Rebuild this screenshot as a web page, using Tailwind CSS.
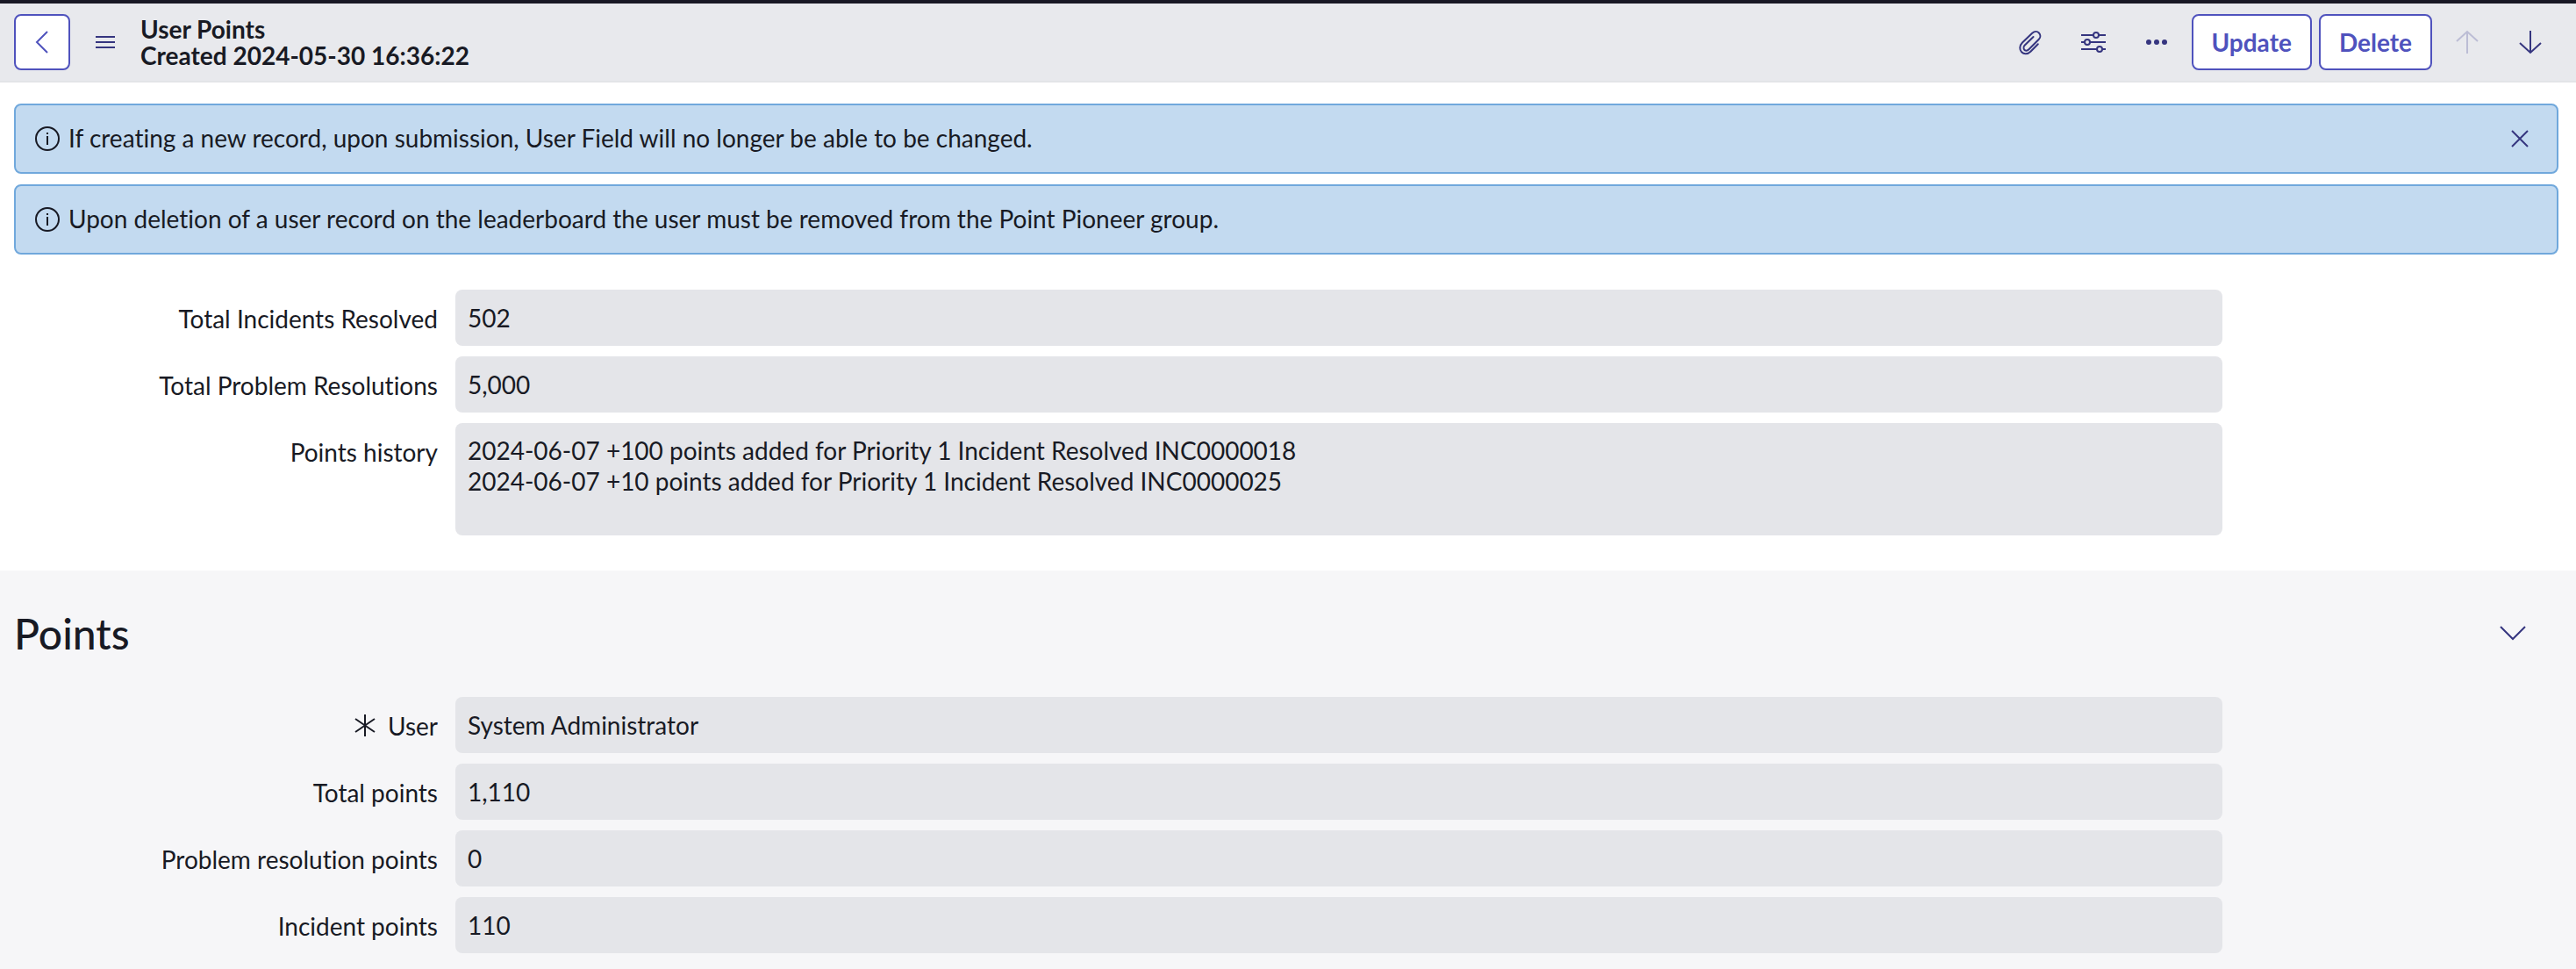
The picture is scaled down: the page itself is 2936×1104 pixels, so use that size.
<!DOCTYPE html>
<html lang="en">
<head>
<meta charset="utf-8">
<title>User Points</title>
<script src="https://cdn.jsdelivr.net/npm/@tailwindcss/browser@4"></script>
</head>
<body class="min-h-screen bg-[#f6f6f8] font-['Lato',sans-serif] text-[28px] leading-[36px] text-[#181a24] [font-variant-ligatures:none]">
<header class="flex h-[94px] items-center border-t-4 border-b-2 border-t-[#181825] border-b-[#e3e4e7] bg-[#e8e9ed] px-4 text-[#35357f]">
  <button aria-label="Back" class="flex size-16 items-center justify-center rounded-lg border-2 border-[#4f52bd] bg-white text-[#4f52bd]">
    <svg class="size-8" viewBox="0 0 32 32" fill="none" stroke="currentColor" stroke-width="2"><path d="M22 4 10 16l12 12"/></svg>
  </button>
  <button aria-label="Menu" class="ml-6 flex size-8 items-center justify-center">
    <svg class="size-8" viewBox="0 0 32 32" fill="none" stroke="currentColor" stroke-width="2"><path d="M5 10h22M5 16h22M5 22h22"/></svg>
  </button>
  <h1 class="ml-6 grow text-[28px] leading-[30px] font-bold text-[#181a24]">User Points<br>Created 2024-05-30 16:36:22</h1>
  <div class="flex items-center">
    <button aria-label="Attachments" class="flex w-[72px] justify-center">
      <svg class="size-8" viewBox="0 0 32 32" fill="none" stroke="currentColor" stroke-width="2" stroke-linecap="round"><path d="M19.500 10 9.500 19.800c-2.300 2.400-.7 5.700 1.700 5.900 1.200.1 2.300-.5 3.200-1.400L25.800 12.800c4.600-4.800-1.800-12.300-7.600-7L7 16.500c-7.400 7.600 1.800 17.700 9.400 10.200l8.400-8.500"/></svg>
    </button>
    <button aria-label="Personalize form" class="flex w-[72px] justify-center">
      <svg class="size-8" viewBox="0 0 32 32" fill="none" stroke="currentColor" stroke-width="2"><path d="M2 8h14M22 8h8M2 16h4M12 16h18M2 24h18M26 24h4"/><circle cx="19" cy="8" r="3"/><circle cx="9" cy="16" r="3"/><circle cx="23" cy="24" r="3"/></svg>
    </button>
    <button aria-label="More options" class="flex w-[72px] justify-center">
      <svg class="size-8" viewBox="0 0 32 32" fill="currentColor"><circle cx="7" cy="16" r="3"/><circle cx="16" cy="16" r="3"/><circle cx="25" cy="16" r="3"/></svg>
    </button>
    <button class="ml-1 h-16 rounded-lg border-2 border-[#4f52bd] bg-white px-[21px] font-bold text-[#4f52bd]">Update</button>
    <button class="ml-2 h-16 rounded-lg border-2 border-[#4f52bd] bg-white px-[21px] font-bold text-[#4f52bd]">Delete</button>
    <button aria-label="Previous record" disabled class="ml-1 flex w-[72px] justify-center text-[#bcbdd5]">
      <svg class="size-8" viewBox="0 0 32 32" fill="none" stroke="currentColor" stroke-width="2"><path d="M16 29V4M4 15 16 4l12 11"/></svg>
    </button>
    <button aria-label="Next record" class="flex w-[72px] justify-center">
      <svg class="size-8" viewBox="0 0 32 32" fill="none" stroke="currentColor" stroke-width="2"><path d="M16 3v25M4 17l12 11 12-11"/></svg>
    </button>
  </div>
</header>
<main>
  <section class="bg-white pt-6 pb-10">
    <div class="mr-5 ml-4 flex flex-col gap-3 [text-rendering:optimizeLegibility]">
      <div role="status" class="flex h-20 items-center gap-2 rounded-lg border-2 border-[#70a8dc] bg-[#c3daf0] pr-[26px] pl-5">
        <svg class="size-8 shrink-0" viewBox="0 0 32 32" fill="none" stroke="currentColor" stroke-width="2"><circle cx="16" cy="16" r="13"/><path d="M16 13v10M16 9v2"/></svg>
        <p class="grow pb-0.5">If creating a new record, upon submission, User Field will no longer be able to be changed.</p>
        <button aria-label="Close" class="text-[#35357f]"><svg class="size-8" viewBox="0 0 32 32" fill="none" stroke="currentColor" stroke-width="2"><path d="m7 7 18 18M25 7 7 25"/></svg></button>
      </div>
      <div role="status" class="flex h-20 items-center gap-2 rounded-lg border-2 border-[#70a8dc] bg-[#c3daf0] pr-[26px] pl-5">
        <svg class="size-8 shrink-0" viewBox="0 0 32 32" fill="none" stroke="currentColor" stroke-width="2"><circle cx="16" cy="16" r="13"/><path d="M16 13v10M16 9v2"/></svg>
        <p class="grow pb-0.5">Upon deletion of a user record on the leaderboard the user must be removed from the Point Pioneer group.</p>
      </div>
    </div>
    <div class="mt-10 grid grid-cols-[519fr_2014fr_403fr] gap-y-3">
      <label for="incidents" class="col-start-1 pt-[15px] pr-5 text-right">Total Incidents Resolved</label>
      <input id="incidents" readonly value="502" class="h-16 w-full rounded-lg bg-[#e4e5e9] px-[14px]">
      <label for="problems" class="col-start-1 pt-[15px] pr-5 text-right">Total Problem Resolutions</label>
      <input id="problems" readonly value="5,000" class="h-16 w-full rounded-lg bg-[#e4e5e9] px-[14px]">
      <label for="history" class="col-start-1 pt-[15px] pr-5 text-right">Points history</label>
      <textarea id="history" readonly class="h-32 w-full resize-none rounded-lg bg-[#e4e5e9] px-[14px] py-[14px] leading-[35px] [text-rendering:optimizeLegibility]">2024-06-07 +100 points added for Priority 1 Incident Resolved INC0000018
2024-06-07 +10 points added for Priority 1 Incident Resolved INC0000025</textarea>
    </div>
  </section>
  <section class="pt-10 pb-4">
    <div class="flex h-16 items-center justify-between pr-14 pl-4">
      <h2 class="text-[48px] leading-[64px] font-medium">Points</h2>
      <button aria-label="Collapse section" class="text-[#35357f]"><svg class="size-8" viewBox="0 0 32 32" fill="none" stroke="currentColor" stroke-width="2"><path d="m2 8 14 14L30 8"/></svg></button>
    </div>
    <div class="mt-10 grid grid-cols-[519fr_2014fr_403fr] gap-y-3">
      <label for="user" class="col-start-1 flex items-start justify-end gap-2.5 pt-[15px] pr-5"><svg class="size-8" viewBox="0 0 32 32" fill="none" stroke="currentColor" stroke-width="2"><path d="M16 5v25M5 10l22 15M27 10 5 25"/></svg>User</label>
      <input id="user" readonly value="System Administrator" class="h-16 w-full rounded-lg bg-[#e4e5e9] px-[14px]">
      <label for="total" class="col-start-1 pt-[15px] pr-5 text-right">Total points</label>
      <input id="total" readonly value="1,110" class="h-16 w-full rounded-lg bg-[#e4e5e9] px-[14px]">
      <label for="resolution" class="col-start-1 pt-[15px] pr-5 text-right">Problem resolution points</label>
      <input id="resolution" readonly value="0" class="h-16 w-full rounded-lg bg-[#e4e5e9] px-[14px]">
      <label for="incident" class="col-start-1 pt-[15px] pr-5 text-right">Incident points</label>
      <input id="incident" readonly value="110" class="h-16 w-full rounded-lg bg-[#e4e5e9] px-[14px]">
    </div>
  </section>
</main>
</body>
</html>
